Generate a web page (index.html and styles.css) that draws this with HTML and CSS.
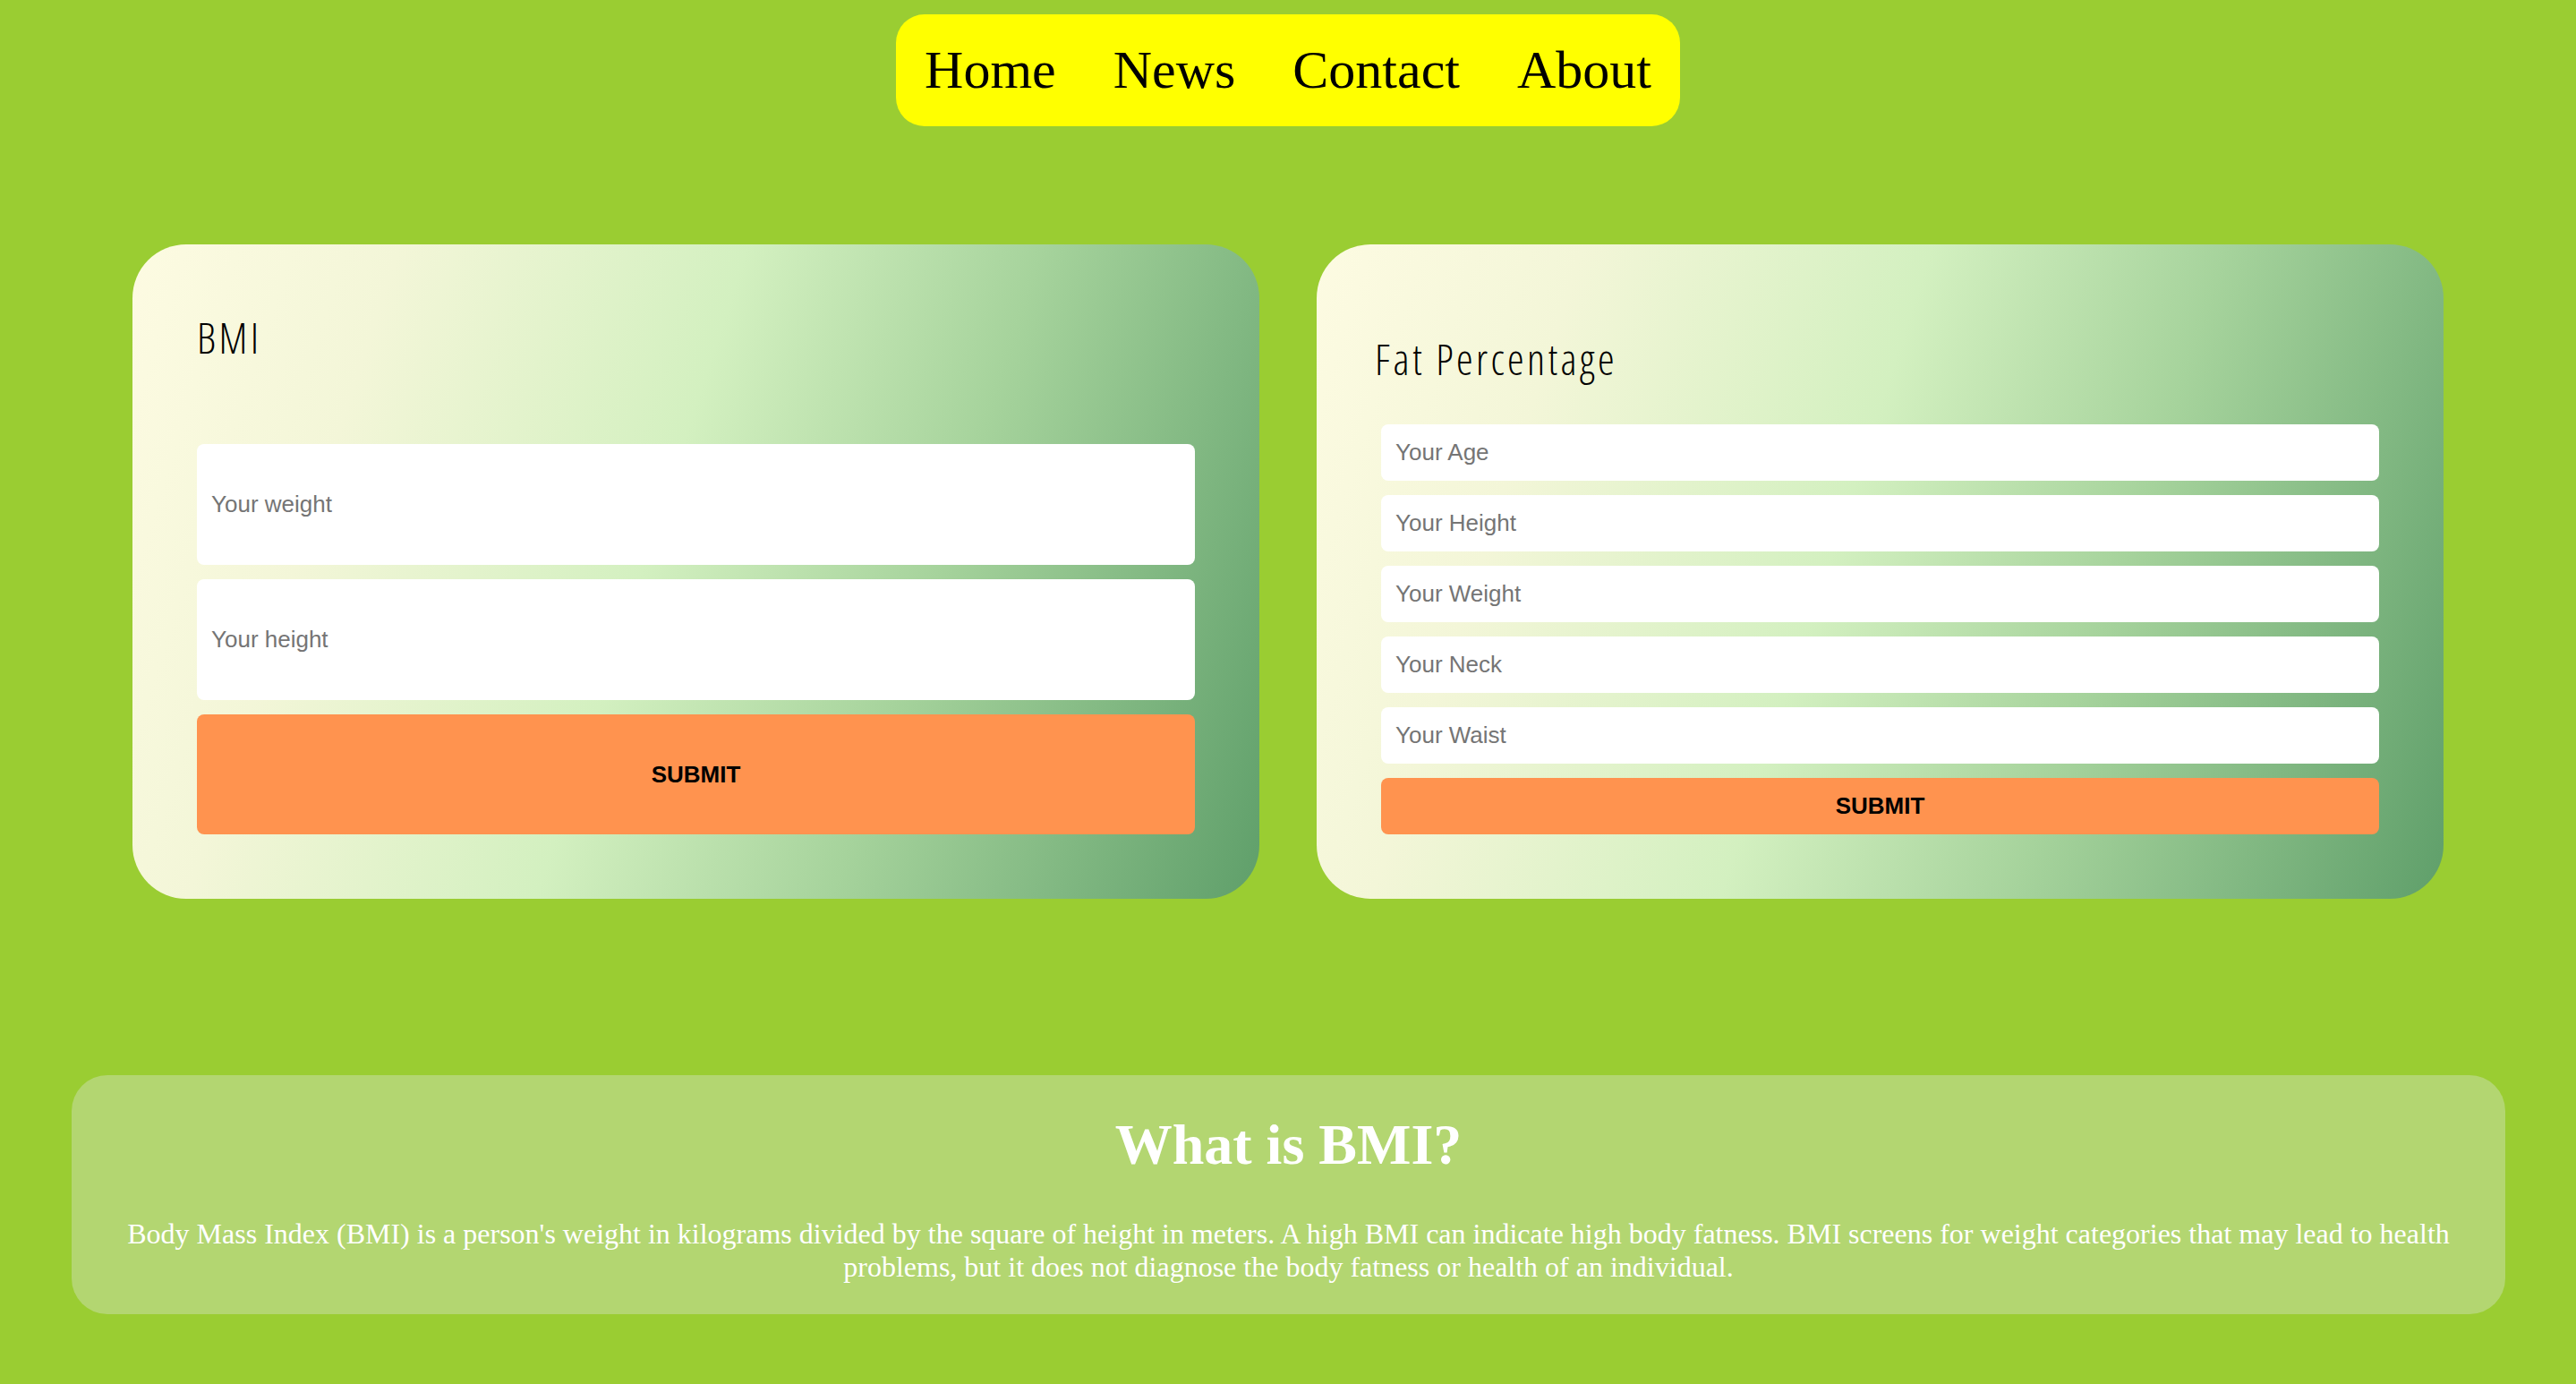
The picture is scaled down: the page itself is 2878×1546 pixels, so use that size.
FILE: index.html
```html
<!DOCTYPE html>
<html lang="en">
<head>
<meta charset="utf-8">
<title>BMI Calculator</title>
<link rel="stylesheet" href="styles.css">
</head>
<body>
<nav class="topnav">
  <ul class="menu">
    <li><a href="#">Home</a></li>
    <li><a href="#">News</a></li>
    <li><a href="#">Contact</a></li>
    <li><a href="#">About</a></li>
  </ul>
</nav>

<main class="calculators">
  <form class="card card-bmi">
    <h2 class="card-title">BMI</h2>
    <input class="field field-tall" type="text" placeholder="Your weight">
    <input class="field field-tall" type="text" placeholder="Your height">
    <button class="submit submit-tall" type="button">Submit</button>
  </form>

  <form class="card card-fat">
    <h2 class="card-title card-title-fat">Fat Percentage</h2>
    <input class="field" type="text" placeholder="Your Age">
    <input class="field" type="text" placeholder="Your Height">
    <input class="field" type="text" placeholder="Your Weight">
    <input class="field" type="text" placeholder="Your Neck">
    <input class="field" type="text" placeholder="Your Waist">
    <button class="submit" type="button">Submit</button>
  </form>
</main>

<section class="info">
  <h1 class="info-title">What is BMI?</h1>
  <p class="info-text">Body Mass Index (BMI) is a person's weight in kilograms divided by the square of height in meters. A high BMI can indicate high body fatness. BMI screens for weight categories that may lead to health problems, but it does not diagnose the body fatness or health of an individual.</p>
</section>
</body>
</html>
```
FILE: styles.css
```css
* {
  box-sizing: border-box;
}

body {
  margin: 0;
  background: #9acd32;
  font-family: "Liberation Serif", "Times New Roman", serif;
}

.topnav {
  display: flex;
  justify-content: center;
  padding-top: 16px;
}

.menu {
  list-style: none;
  margin: 0;
  padding: 0;
  height: 125px;
  display: flex;
  align-items: center;
  background: #ffff00;
  border-radius: 32px;
}

.menu a {
  display: block;
  padding: 0 32px;
  font-family: "Liberation Serif", "Times New Roman", serif;
  font-size: 60px;
  color: #000;
  text-decoration: none;
}

.calculators {
  display: grid;
  grid-template-columns: 1fr 1fr;
  gap: 64px;
  padding: 0 148px;
  margin-top: 132px;
}

.card {
  display: flex;
  flex-direction: column;
  gap: 16px;
  padding: 72px;
  border-radius: 60px;
  background: linear-gradient(108deg, #fdfbe2 0%, #f3f6d8 20%, #d3f0c0 46%, #a6d39c 68%, #5f9f6a 100%);
}

.card-fat {
  justify-content: flex-end;
}

.card-title {
  margin: 0 0 71px 0;
  font-family: "Open Sans", sans-serif;
  font-stretch: 75%;
  font-weight: 300;
  font-size: 47px;
  letter-spacing: 3.4px;
  color: #000;
}

.card-title-fat {
  margin: 0 0 25px -7px;
}

.field {
  display: block;
  width: 100%;
  height: 63px;
  border: none;
  border-radius: 8px;
  background: #fff;
  padding: 0 16px;
  font-family: "Liberation Sans", Arial, sans-serif;
  font-size: 26px;
  color: #000;
  outline: none;
}

.field::placeholder {
  color: #757575;
}

.field-tall {
  height: 135px;
}

.submit {
  display: block;
  width: 100%;
  height: 63px;
  border: none;
  border-radius: 8px;
  background: #ff934f;
  font-family: "Liberation Sans", Arial, sans-serif;
  font-weight: bold;
  font-size: 26px;
  text-transform: uppercase;
  color: #000;
}

.submit-tall {
  height: 134px;
}

.info {
  margin: 197px 79px 0 80px;
  padding: 41px 32px 34px;
  border-radius: 40px;
  background: #b3d671;
  color: #fff;
  text-align: center;
}

.info-title {
  margin: 0 0 44px;
  font-size: 64px;
  font-weight: bold;
}

.info-text {
  margin: 0;
  font-size: 32px;
}
```
